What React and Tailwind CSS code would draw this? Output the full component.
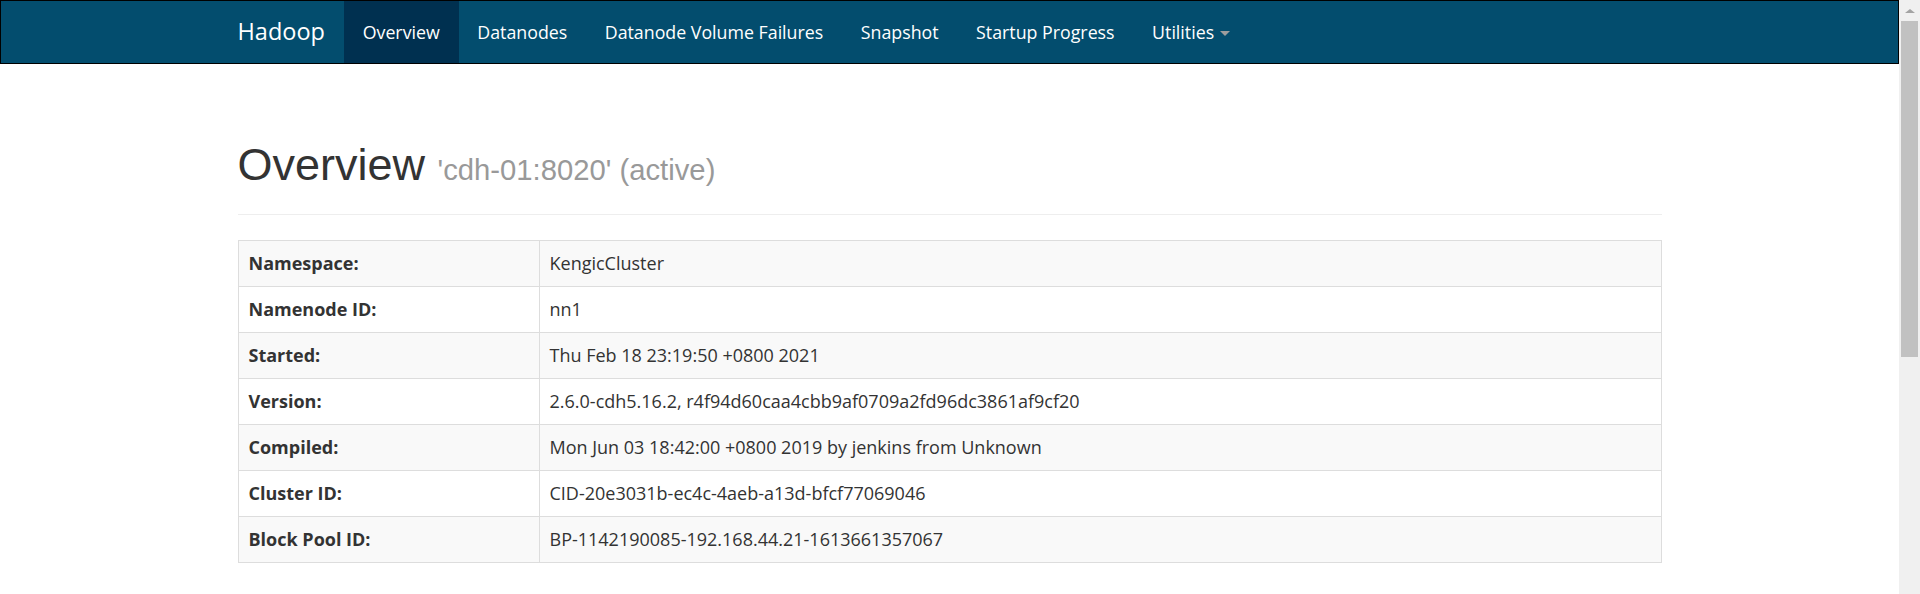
import React from 'react';

const navItems = [
  { label: 'Overview', active: true },
  { label: 'Datanodes' },
  { label: 'Datanode Volume Failures' },
  { label: 'Snapshot' },
  { label: 'Startup Progress' },
  { label: 'Utilities', dropdown: true },
];

const rows = [
  ['Namespace:', 'KengicCluster'],
  ['Namenode ID:', 'nn1'],
  ['Started:', 'Thu Feb 18 23:19:50 +0800 2021'],
  ['Version:', '2.6.0-cdh5.16.2, r4f94d60caa4cbb9af0709a2fd96dc3861af9cf20'],
  ['Compiled:', 'Mon Jun 03 18:42:00 +0800 2019 by jenkins from Unknown'],
  ['Cluster ID:', 'CID-20e3031b-ec4c-4aeb-a13d-bfcf77069046'],
  ['Block Pool ID:', 'BP-1142190085-192.168.44.21-1613661357067'],
];

function Navbar() {
  return (
    <nav className="h-[64px] border border-black bg-[#034d6e] font-['Open_Sans',sans-serif]">
      <div className="w-[1424px] mx-auto flex h-full">
        <a className="-ml-[19px] px-[19px] flex items-center text-[23.5px] text-white pb-[1px]">Hadoop</a>
        <ul className="flex">
          {navItems.map(item => (
            <li
              key={item.label}
              className={`px-[18.75px] pt-[18.75px] text-[17.8px] leading-[25px] text-white ${item.active ? 'bg-[#003050]' : ''}`}
            >
              {item.label}
              {item.dropdown && (
                <span className="inline-block ml-[6px] align-middle w-0 h-0 border-t-[5px] border-x-[5px] border-t-[#9d9d9d] border-x-transparent" />
              )}
            </li>
          ))}
        </ul>
      </div>
    </nav>
  );
}

function Scrollbar() {
  return (
    <div className="w-[21px] shrink-0 bg-[#f0f0f0] flex flex-col items-center">
      <div className="h-[21px] flex items-center justify-center">
        <span className="w-0 h-0 border-b-[4px] border-x-[5px] border-b-[#a3a3a3] border-x-transparent" />
      </div>
      <div className="w-[17px] h-[336px] bg-[#c1c1c1]" />
    </div>
  );
}

export default function App() {
  return (
    <div className="flex h-[594px] overflow-hidden bg-white">
      <div className="flex-1 min-w-0">
        <Navbar />
        <div className="w-[1424px] mx-auto pt-[76px]">
          <div className="pb-[24px] border-b border-[#eeeeee] mb-[25px]">
            <h1 className="font-['Liberation_Sans',Arial,sans-serif] text-[45px] leading-[49.5px] text-[#333333] font-medium">
              Overview{' '}
              <small className="text-[29.25px] leading-none text-[#999999] font-normal">'cdh-01:8020' (active)</small>
            </h1>
          </div>
          <table className="w-full border-collapse border border-[#dddddd] font-['Open_Sans',sans-serif] text-[18px] leading-[25px] text-[#333333]">
            <tbody>
              {rows.map(([label, value], i) => (
                <tr key={label} className={i % 2 === 0 ? 'bg-[#f9f9f9]' : 'bg-white'}>
                  <th className="w-[301px] border border-[#dddddd] p-[10px] text-left font-bold">{label}</th>
                  <td className="border border-[#dddddd] p-[10px]">{value}</td>
                </tr>
              ))}
            </tbody>
          </table>
        </div>
      </div>
      <Scrollbar />
    </div>
  );
}
